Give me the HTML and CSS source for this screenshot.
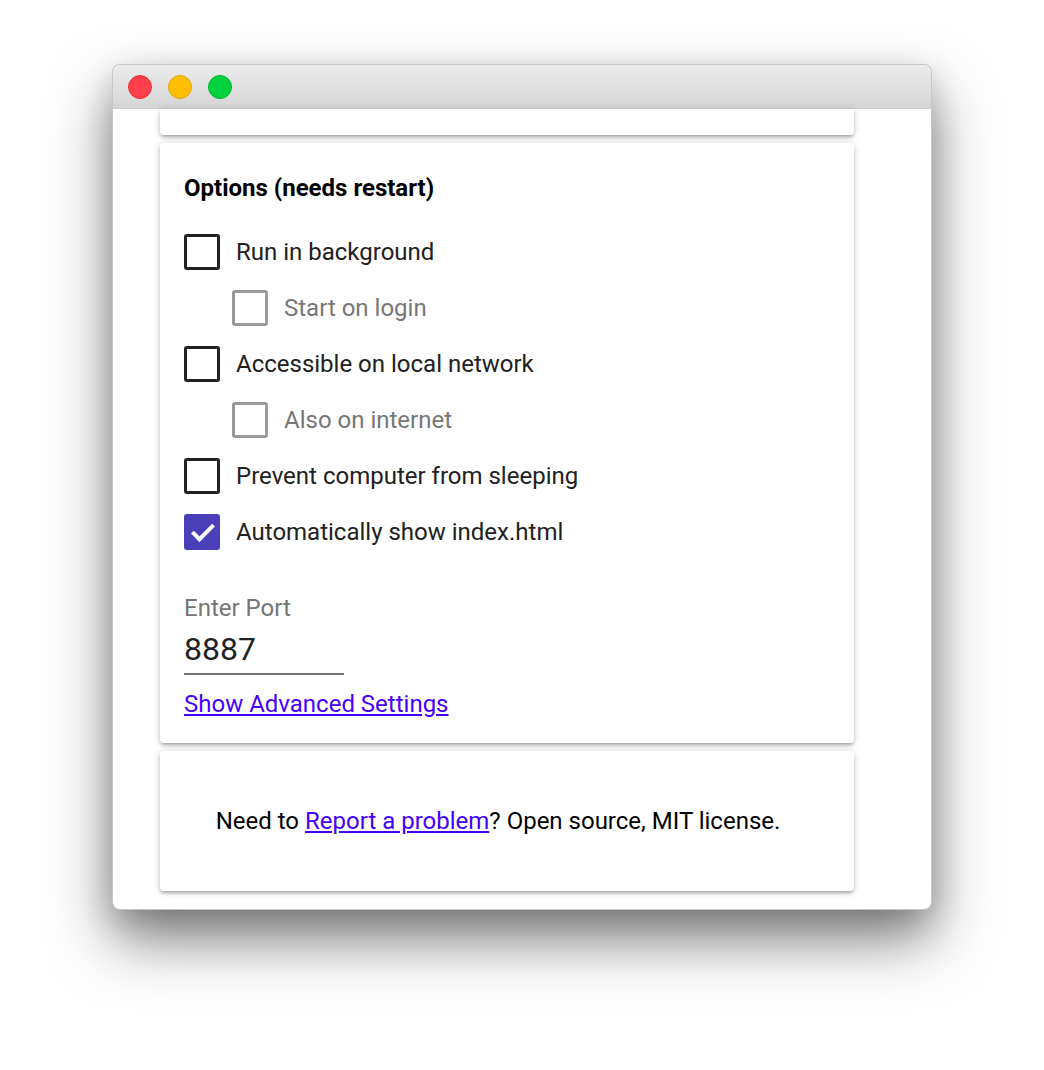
FILE: index.html
```html
<!DOCTYPE html>
<html lang="en">
<head>
  <meta charset="UTF-8">
  <title>Options</title>
  <link rel="stylesheet" href="styles.css">
</head>
<body>
<div class="window">
  <div class="titlebar">
    <span class="light red"></span>
    <span class="light yellow"></span>
    <span class="light green"></span>
  </div>
  <div class="content">
    <div class="card card-clipped"></div>

    <div class="card options">
      <h3 class="options-title">Options (needs restart)</h3>
      <label class="option">
        <input type="checkbox">
        <span>Run in background</span>
      </label>
      <label class="option sub disabled">
        <input type="checkbox" disabled>
        <span>Start on login</span>
      </label>
      <label class="option">
        <input type="checkbox">
        <span>Accessible on local network</span>
      </label>
      <label class="option sub disabled">
        <input type="checkbox" disabled>
        <span>Also on internet</span>
      </label>
      <label class="option">
        <input type="checkbox">
        <span>Prevent computer from sleeping</span>
      </label>
      <label class="option">
        <input type="checkbox" checked>
        <span>Automatically show index.html</span>
      </label>

      <div class="port">
        <label class="port-label" for="port">Enter Port</label>
        <input id="port" class="port-input" type="text" value="8887">
      </div>
      <a class="link" href="#">Show Advanced Settings</a>
    </div>

    <div class="card footer">
      <p>Need to <a class="link" href="#">Report a problem</a>? Open source, MIT license.</p>
    </div>
  </div>
</div>
</body>
</html>
```

FILE: styles.css
```css
html {
  background-color: #fff;
}

body {
  font-family: Roboto, 'Noto Sans', sans-serif;
  background-color: #fff;
  margin: 0;
  padding: 64px 112px 0;
  min-height: 1070px;
  box-sizing: border-box;
}

.window {
  width: 820px;
  height: 846px;
  box-sizing: border-box;
  border: 1px solid rgba(0, 0, 0, 0.22);
  border-radius: 8px;
  overflow: hidden;
  background-color: #fff;
  box-shadow: 0 30px 60px 0 rgba(0, 0, 0, 0.5),
              0 10px 30px 0 rgba(0, 0, 0, 0.15);
}

.titlebar {
  height: 43px;
  display: flex;
  align-items: center;
  gap: 16px;
  padding-left: 15px;
  background: linear-gradient(#ececec, #d5d5d5);
  border-bottom: 1px solid #cfcfcf;
}

.light {
  width: 22px;
  height: 22px;
  border-radius: 50%;
  border: 1px solid;
}

.red {
  background-color: #ff3f4b;
  border-color: #e5323e;
}

.yellow {
  background-color: #ffbe00;
  border-color: #e3a600;
}

.green {
  background-color: #00d23e;
  border-color: #00b432;
}

.content {
  display: flex;
  flex-direction: column;
  gap: 8px;
  padding-left: 47px;
}

.card {
  width: 694px;
  box-sizing: border-box;
  background-color: #fff;
  border-radius: 4px;
  box-shadow: 0 3px 3px 0 rgba(0, 0, 0, 0.14),
              0 4px 2px -3px rgba(0, 0, 0, 0.12),
              0 1px 7px 0 rgba(0, 0, 0, 0.2);
}

.card-clipped {
  height: 26px;
  border-radius: 0 0 4px 4px;
}

.options {
  height: 600px;
  padding: 27px 24px 0;
  color: #212121;
}

.options-title {
  margin: 0 0 18px;
  font-size: 24px;
  line-height: 36px;
  font-weight: bold;
  color: #000;
}

.option {
  height: 56px;
  display: flex;
  align-items: center;
  gap: 16px;
  font-size: 24px;
  color: #212121;
}

.option.sub {
  padding-left: 48px;
}

.option.disabled {
  color: #777;
}

.option input {
  appearance: none;
  -webkit-appearance: none;
  margin: 0;
  width: 36px;
  height: 36px;
  box-sizing: border-box;
  border: 3px solid #212121;
  border-radius: 3px;
  position: relative;
}

.option input:disabled {
  border-color: #999;
}

.option input:checked {
  border-color: #4a3fb8;
  background-color: #4a3fb8;
}

.option input:checked::after {
  content: '';
  position: absolute;
  left: 10px;
  top: 2px;
  width: 8px;
  height: 18px;
  border: solid #fff;
  border-width: 0 4px 4px 0;
  transform: rotate(45deg);
}

.port {
  display: flex;
  flex-direction: column;
  align-items: flex-start;
  margin-top: 30px;
}

.port-label {
  font-size: 24px;
  line-height: 36px;
  color: #757575;
}

.port-input {
  margin-top: 3px;
  width: 160px;
  height: 46px;
  box-sizing: border-box;
  padding: 0 0 4px;
  border: none;
  border-bottom: 2px solid #757575;
  outline: none;
  font-family: inherit;
  font-size: 32px;
  color: #212121;
  background: transparent;
}

.link {
  color: #4600ff;
  text-decoration: underline;
}

.options .link {
  display: inline-block;
  margin-top: 11px;
  font-size: 24px;
  line-height: 36px;
}

.footer {
  height: 140px;
  display: flex;
  align-items: center;
  justify-content: center;
  padding-right: 18px;
}

.footer p {
  margin: 0;
  font-size: 24px;
  color: #000;
}
```
